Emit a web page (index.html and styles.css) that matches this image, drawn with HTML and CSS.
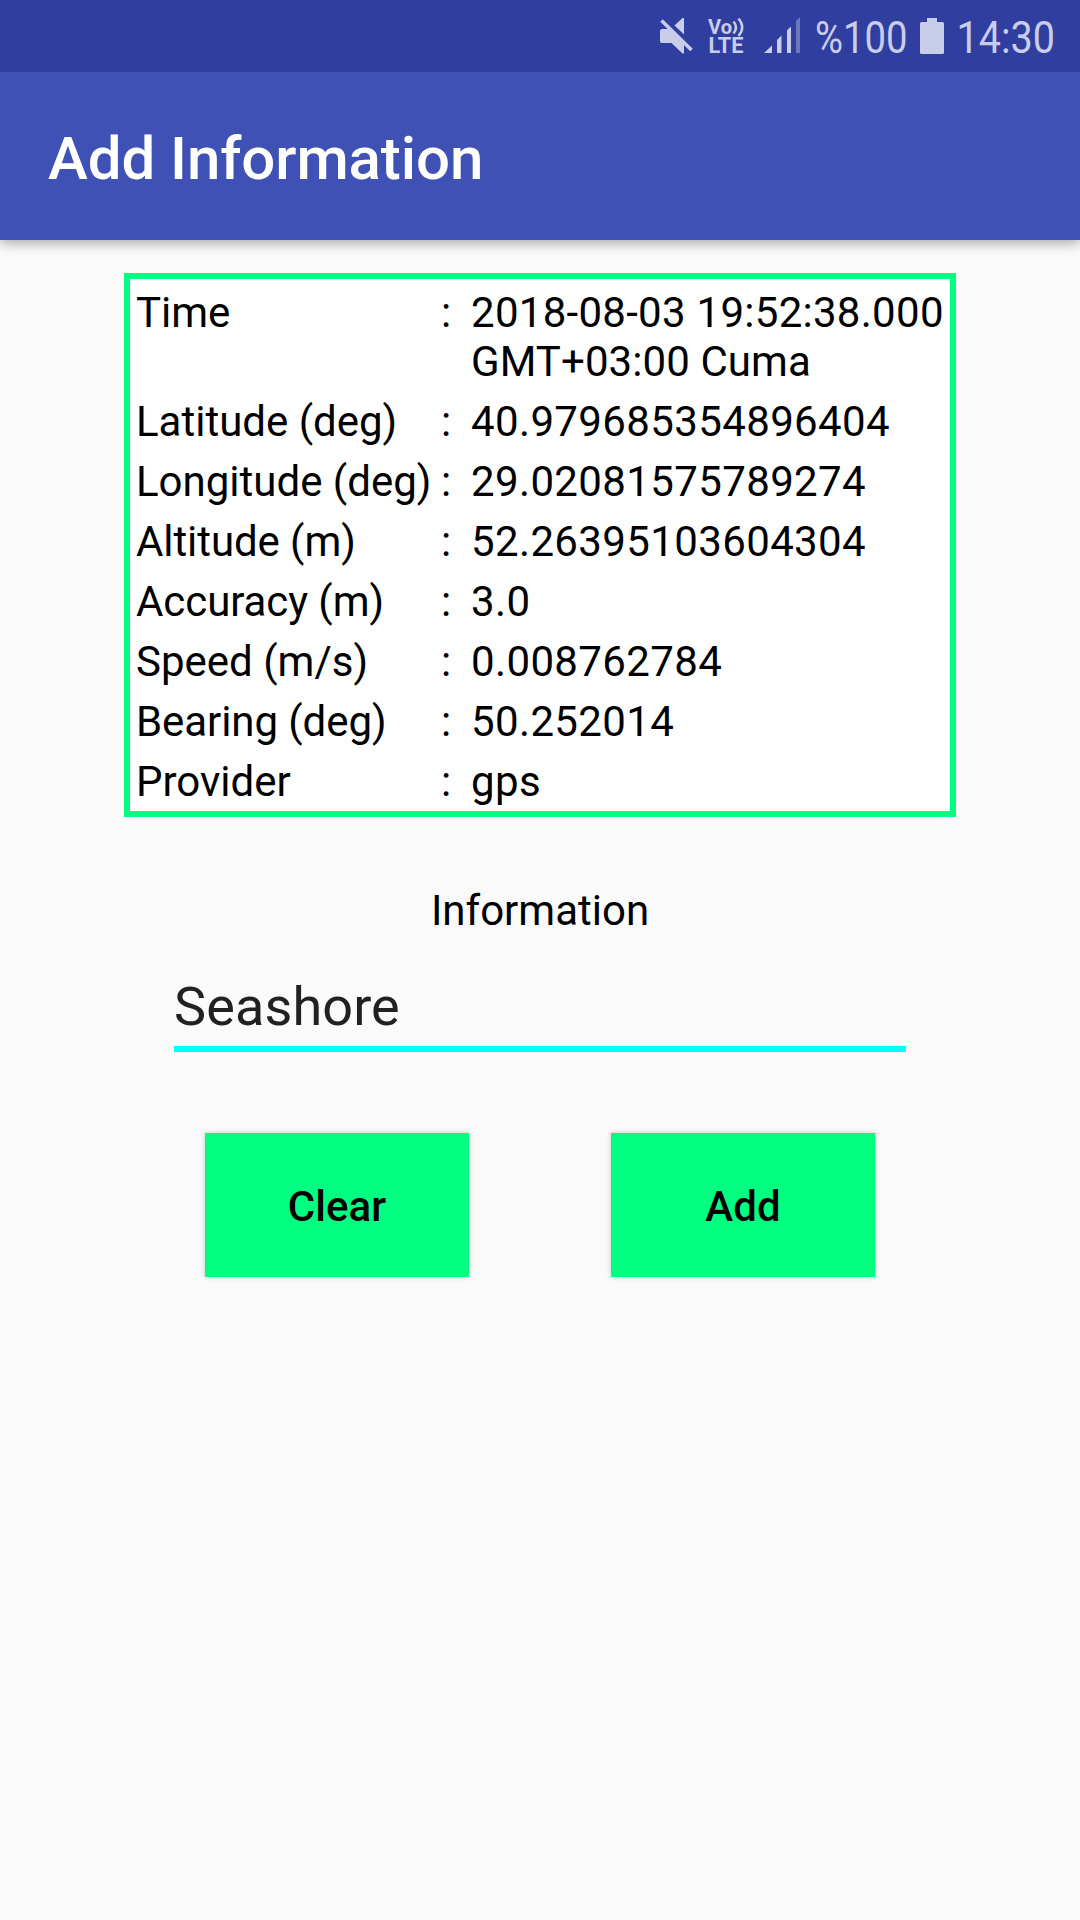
FILE: index.html
```html
<!DOCTYPE html>
<html lang="en">
<head>
<meta charset="utf-8">
<title>Add Information</title>
<link rel="stylesheet" href="styles.css">
</head>
<body>
<div class="statusbar">
  <svg class="status-icons" width="432" height="72" viewBox="648 0 432 72" fill="#c8cde9">
    <!-- muted speaker -->
    <path d="M662 29h6.500L684 44.500V53.500h-1.500L671.500 43H662a2 2 0 0 1-2-2V31a2 2 0 0 1 2-2z"/>
    <path d="M674.500 25.500L682.500 18H684V34.500z"/>
    <path d="M661.500 20.500L691.500 50" fill="none" stroke="#c8cde9" stroke-width="3.600"/>
    <!-- VoLTE -->
    <text class="volte" x="708" y="33.500" font-size="20" textLength="24" lengthAdjust="spacingAndGlyphs">Vo</text>
    <text class="volte" x="708.500" y="53.300" font-size="21.500" textLength="35" lengthAdjust="spacingAndGlyphs">LTE</text>
    <path d="M733.500 21.500Q738.500 27.500 733.500 33.500M738.500 18.500Q746 27.500 738.500 36" fill="none" stroke="#c8cde9" stroke-width="2.400"/>
    <!-- signal -->
    <path d="M764 53L772 45.500V53zM777 40L781.500 35.500V53H777zM787 30.500L791 26.500V53H787z"/>
    <path d="M796 21L800 17V53H796z" opacity=".4"/>
    <text class="status-text" x="815" y="53" textLength="92.500" lengthAdjust="spacingAndGlyphs">%100</text>
    <!-- battery -->
    <path d="M927 18h10v4h5.500a1.500 1.500 0 0 1 1.500 1.500v29a1.500 1.500 0 0 1-1.500 1.500h-21a1.500 1.500 0 0 1-1.500-1.500v-29a1.500 1.500 0 0 1 1.500-1.500h5.500z"/>
    <text class="status-text" x="956.500" y="53" textLength="98.500" lengthAdjust="spacingAndGlyphs">14:30</text>
  </svg>
</div>
<header class="appbar"><h1 class="title">Add Information</h1></header>
<main class="content">
  <section class="details">
    <span>Time</span><span>:</span><span><span class="stamp">2018-08-03 19:52:38.000</span><br><span class="zone">GMT+03:00 Cuma</span></span>
    <span>Latitude (deg)</span><span>:</span><span class="value">40.979685354896404</span>
    <span>Longitude (deg)</span><span>:</span><span class="value">29.02081575789274</span>
    <span class="tight">Altitude (m)</span><span>:</span><span class="value">52.26395103604304</span>
    <span class="tight">Accuracy (m)</span><span>:</span><span class="value">3.0</span>
    <span>Speed (m/s)</span><span>:</span><span class="value">0.008762784</span>
    <span class="tight">Bearing (deg)</span><span>:</span><span class="value">50.252014</span>
    <span>Provider</span><span>:</span><span class="value">gps</span>
  </section>
  <div class="label">Information</div>
  <div class="field">Seashore</div>
  <div class="actions">
    <button class="button">Clear</button>
    <button class="button">Add</button>
  </div>
</main>
</body>
</html>
```
FILE: styles.css
```css
* { box-sizing: border-box; }
body {
  margin: 0;
  height: 1920px;
  background: #fafafa;
  color: #000;
  font-family: Roboto, sans-serif;
  font-size: 42px;
  line-height: 49px;
}
.statusbar {
  display: flex;
  justify-content: flex-end;
  height: 72px;
  background: #303f9f;
}
.status-icons { display: block; }
.status-text { font-size: 45px; }
.volte { font-weight: 700; }
.appbar {
  display: flex;
  align-items: center;
  height: 168px;
  padding: 6px 48px 0;
  background: #3f51b5;
  box-shadow: 0 4px 11px rgba(0, 0, 0, .3);
  clip-path: inset(0 0 -24px 0);
}
.title {
  margin: 0;
  color: #fff;
  font-size: 60px;
  font-weight: 500;
  line-height: 70px;
  letter-spacing: -.08px;
}
.content {
  display: flex;
  flex-direction: column;
  align-items: center;
  padding-top: 33px;
}
.details {
  display: grid;
  grid-template-columns: 305px 30px 1fr;
  row-gap: 11px;
  width: 832px;
  height: 544px;
  padding: 9px 0 5px 6px;
  border: 6px solid #00ff80;
  background: #fff;
  white-space: nowrap;
}
.value { letter-spacing: .37px; }
.stamp { letter-spacing: .28px; }
.zone { letter-spacing: .08px; }
.tight { letter-spacing: -.08px; }
.label { margin-top: 69px; }
.field {
  width: 732px;
  height: 90px;
  margin-top: 27px;
  padding-top: 13px;
  border-bottom: 6px solid #00ffff;
  color: #212121;
  font-size: 54px;
  line-height: 63px;
  letter-spacing: .12px;
}
.actions {
  display: flex;
  gap: 142px;
  margin-top: 81px;
}
.button {
  width: 264px;
  height: 144px;
  padding: 3px 0 0;
  border: 0;
  background: #00ff80;
  box-shadow: 0 0 5px rgba(0, 0, 0, .22);
  color: #000;
  font: 500 42px/49px Roboto, sans-serif;
  letter-spacing: .1px;
}
```
